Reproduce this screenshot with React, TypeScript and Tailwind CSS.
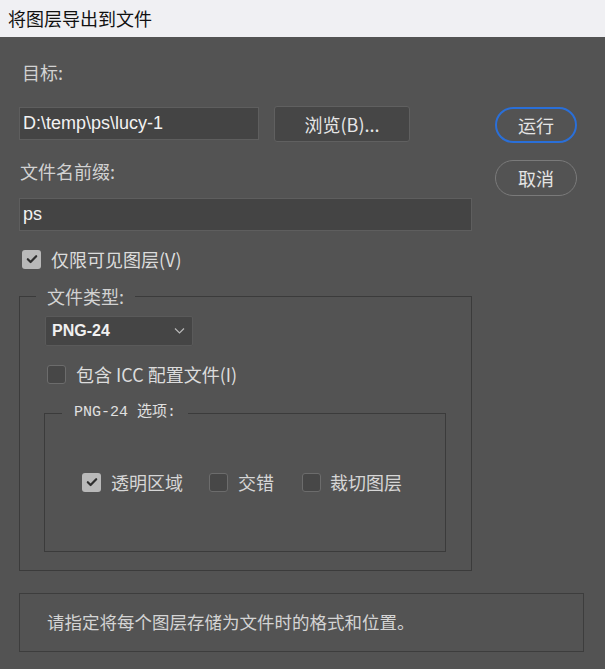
import React from 'react';

const cjk = { fontFamily: '"Noto Sans CJK SC", "Liberation Sans", sans-serif' };
const latin = { fontFamily: '"Liberation Sans", "Noto Sans CJK SC", sans-serif' };
const mono = { fontFamily: '"Liberation Mono", "Noto Sans CJK SC", monospace' };

function Check({ checked }: { checked: boolean }) {
  if (checked) {
    return (
      <span className="flex h-[19px] w-[19px] shrink-0 items-center justify-center rounded-[3px] bg-[#b9b9b9]">
        <svg className="h-[12px] w-[12px]" viewBox="0 0 12 12" fill="none">
          <path d="M1.8 6.2 L4.6 9 L10.2 3.2" stroke="#2e2e2e" strokeWidth={2.2} strokeLinecap="round" strokeLinejoin="round" />
        </svg>
      </span>
    );
  }
  return <span className="block h-[19px] w-[19px] shrink-0 rounded-[3px] border border-[#6c6c6c] bg-[#474747]" />;
}

export default function App() {
  return (
    <div className="h-[669px] w-[605px] overflow-hidden bg-[#535353] text-[#d2d2d2]" style={cjk}>
      <div className="flex h-[37px] items-center bg-[#f0f0f3] pl-[8px] text-[18px] text-[#111]">
        将图层导出到文件
      </div>

      <div className="px-[19px] pt-[25px]">
        <div className="flex">
          <div className="w-[453px]">
            <div className="h-[20px] pl-[3px] text-[18px] leading-[20px]">目标:</div>

            <div className="mt-[24px] flex h-[36px]">
              <div className="mt-[1px] flex h-[33px] w-[240px] items-center border border-[#5e5e5e] bg-[#444444] pl-[3px] text-[18px] text-[#f2f2f2]" style={latin}>
                D:\temp\ps\lucy-1
              </div>
              <button className="ml-[15px] flex h-[36px] w-[136px] items-center justify-center rounded-[3px] border border-[#606060] bg-[#464646] text-[18px] text-[#e6e6e6]">
                浏览(B)...
              </button>
            </div>

            <div className="mt-[19px] h-[20px] pl-[1px] text-[18px] leading-[20px]">文件名前缀:</div>

            <div className="mt-[17px] flex h-[33px] items-center border border-[#5e5e5e] bg-[#444444] pl-[3px] text-[18px] text-[#f2f2f2]" style={latin}>
              ps
            </div>

            <div className="mt-[18px] flex h-[20px] items-center pl-[3px]">
              <Check checked />
              <span className="ml-[10px] text-[18px] text-[#dcdcdc]">仅限可见图层(V)</span>
            </div>

            <fieldset className="mt-[17px] h-[285px] border border-[#3b3b3b] pl-[25px]">
              <legend className="ml-[-9px] px-[11px] text-[18px] leading-[20px]">文件类型:</legend>

              <div className="mt-[10px] flex h-[30px] w-[148px] items-center justify-between rounded-[2px] border border-[#5a5a5a] bg-[#454545] pl-[6px] pr-[7px]">
                <span className="text-[16px] font-semibold text-[#f0f0f0]" style={latin}>PNG-24</span>
                <svg className="h-[8px] w-[11px]" viewBox="0 0 11 8" fill="none">
                  <path d="M1 1.5 L5.5 6 L10 1.5" stroke="#b8b8b8" strokeWidth={1.2} />
                </svg>
              </div>

              <div className="mt-[19px] flex h-[19px] items-center pl-[2px]">
                <Check checked={false} />
                <span className="ml-[10px] text-[18px] text-[#dcdcdc]">包含 ICC 配置文件(I)</span>
              </div>

              <fieldset className="ml-[-1px] mt-[19px] h-[149px] w-[402px] border border-[#3b3b3b] pl-[37px]">
                <legend className="ml-[-20px] px-[12px] text-[15px] leading-[20px] text-[#e0e0e0]" style={mono}>
                  PNG-24 选项:
                </legend>
                <div className="mt-[49px] flex h-[20px] items-center text-[18px] text-[#d6d6d6]">
                  <Check checked />
                  <span className="ml-[10px]">透明区域</span>
                  <div className="ml-[26px] flex">
                    <Check checked={false} />
                  </div>
                  <span className="ml-[10px]">交错</span>
                  <div className="ml-[28px] flex">
                    <Check checked={false} />
                  </div>
                  <span className="ml-[9px]">裁切图层</span>
                </div>
              </fieldset>
            </fieldset>
          </div>

          <div className="ml-[23px] w-[82px]">
            <button className="mt-[45px] flex h-[36px] w-[82px] items-center justify-center rounded-full border-2 border-[#2a6fd8] text-[18px] text-[#e4e4e4]">
              运行
            </button>
            <button className="mt-[17px] flex h-[36px] w-[82px] items-center justify-center rounded-full border border-[#7a7a7a] text-[18px] text-[#e4e4e4]">
              取消
            </button>
          </div>
        </div>

        <div className="mt-[22px] flex h-[59px] w-[565px] items-center border border-[#3d3d3d] pl-[27px] text-[17.5px] text-[#d4d4d4]">
          请指定将每个图层存储为文件时的格式和位置。
        </div>
      </div>
    </div>
  );
}
